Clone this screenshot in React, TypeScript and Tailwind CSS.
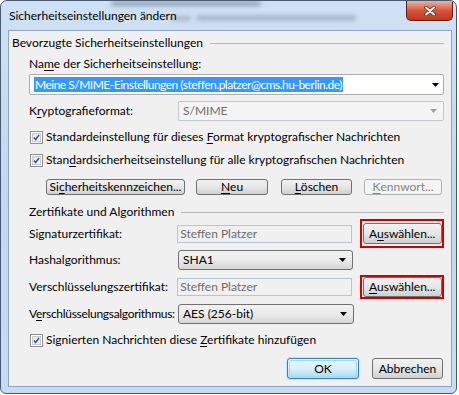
import React from "react";

const Check = () => (
  <div className="w-[13px] h-[13px] border border-[#8e8f8f] bg-white p-px shrink-0">
    <div className="w-full h-full border border-[#c6cbd1] bg-gradient-to-br from-[#dfe3e8] to-[#fbfbfb] flex items-center justify-center">
      <svg width="9" height="9" viewBox="0 0 9 9">
        <path d="M1.2 4.6 L3.4 7 L7.8 1.4" fill="none" stroke="#3f5486" strokeWidth="2" />
      </svg>
    </div>
  </div>
);

const Arrow = ({ color = "#000" }: { color?: string }) => (
  <svg width="7" height="4" viewBox="0 0 7 4">
    <path d="M0 0 H7 L3.5 4 Z" fill={color} />
  </svg>
);

const Btn = ({ children, className = "", disabled = false }: { children: React.ReactNode; className?: string; disabled?: boolean }) => (
  <div
    className={
      "flex items-center justify-center rounded-[3px] border " +
      (disabled
        ? "border-[#adb2b5] bg-[#f4f4f4] text-[#838383] "
        : "border-[#707070] bg-gradient-to-b from-[#f2f2f2] via-[#e6e6e6] to-[#d0d0d0] text-black ") +
      className
    }
  >
    {children}
  </div>
);

const Select = ({ value, className = "" }: { value: string; className?: string }) => (
  <div className={"flex items-center justify-between rounded-[3px] border border-[#707070] bg-gradient-to-b from-[#f2f2f2] via-[#ebebeb] to-[#d6d6d6] pl-[4px] pr-[6px] " + className}>
    <span>{value}</span>
    <Arrow />
  </div>
);

const ReadOnly = ({ value, className = "" }: { value: string; className?: string }) => (
  <div className={"flex items-center border border-[#b5c3d2] bg-[#f0f0f0] pl-[2px] text-[#6d6d6d] " + className}>
    {value}
  </div>
);

const U = ({ children }: { children: React.ReactNode }) => <span className="underline underline-offset-[2px]">{children}</span>;

export default function App() {
  return (
    <div className="w-[459px] h-[395px] bg-white font-[family-name:Lato,Arial,sans-serif] text-[12px] leading-4 text-black">
      <div className="relative w-[457px] h-[394px] rounded-t-[7px] rounded-b-[6px] border border-[#4a5a6e] bg-gradient-to-b from-[#cfe1f4] via-[#c2d8ef] to-[#c6dcf2] flex flex-col overflow-hidden">
        {/* blurred background through the glass */}
        <div className="pointer-events-none absolute left-[110px] top-[0px] w-[150px] h-[5px] rounded-full bg-[#5b6b80]/50 blur-[2px]" />
        <div className="pointer-events-none absolute left-[195px] top-[14px] w-[160px] h-[6px] rounded-full bg-[#6d7d92]/40 blur-[2px]" />
        <div className="pointer-events-none absolute left-[170px] top-[15px] w-[20px] h-[5px] rounded-full bg-[#6d7d92]/40 blur-[2px]" />

        <div className="relative h-[29px] flex items-start justify-between">
          <span className="ml-[8px] mt-[7px] text-[12px] text-black">Sicherheitseinstellungen ändern</span>
          <div className="mr-[3px] w-[47px] h-[20px] rounded-b-[5px] border border-t-0 border-[#5a1f18] bg-gradient-to-b from-[#eab0a0] via-[#d6553b] to-[#c1361c] flex items-center justify-center">
            <svg width="12" height="10" viewBox="0 0 12 10">
              <path d="M2 1.5 L10 8.5 M10 1.5 L2 8.5" stroke="#5a2a22" strokeWidth="3.6" strokeLinecap="round" />
              <path d="M2 1.5 L10 8.5 M10 1.5 L2 8.5" stroke="#ffffff" strokeWidth="2" strokeLinecap="round" />
            </svg>
          </div>
        </div>

        <div className="relative ml-[7px] w-[444px] h-[357px] border border-[#8fa5bf] bg-[#f0f0f0] flex flex-col">
          {/* Bevorzugte Sicherheitseinstellungen */}
          <div className="mt-[4px] h-4 flex items-center pl-[3px] pr-[7px]">
            <span>Bevorzugte Sicherheitseinstellungen</span>
            <div className="flex-1 h-px bg-[#b9b9b9] ml-[7px]" />
          </div>

          <div className="pl-[20px] pr-[7px] flex flex-col">
            <div className="mt-[5px] h-4">
              Na<U>m</U>e der Sicherheitseinstellung:
            </div>
            <div className="mt-[2px] h-[21px] rounded-[2px] border border-[#abadb3] bg-white flex items-center justify-between pl-[4px] pr-[4px]">
              <span className="bg-[#3399ff] text-white px-px leading-[15px] tracking-[-0.5px]">Meine S/MIME-Einstellungen (steffen.platzer@cms.hu-berlin.de)</span>
              <Arrow />
            </div>

            <div className="mt-[6px] h-[20px] flex items-center">
              <span className="w-[149px]">
                K<U>r</U>yptografieformat:
              </span>
              <div className="flex-1 h-[20px] rounded-[2px] border border-[#c3c8ce] bg-[#f4f4f4] text-[#6d6d6d] flex items-center justify-between pl-[4px] pr-[6px]">
                <span>S/MIME</span>
                <Arrow color="#a0a0a0" />
              </div>
            </div>

            <div className="mt-[8px] h-4 flex items-center pl-[1px]">
              <Check />
              <span className="ml-[3px]">
                Standardeinstellung für dieses <U>F</U>ormat kryptografischer Nachrichten
              </span>
            </div>
            <div className="mt-[7px] h-4 flex items-center pl-[1px]">
              <Check />
              <span className="ml-[3px]">
                Stan<U>d</U>ardsicherheitseinstellung für alle kryptografischen Nachrichten
              </span>
            </div>

            <div className="mt-[11px] h-[16px] flex">
              <Btn className="ml-[17px] w-[139px] h-[16px]">
                Si<U>c</U>herheitskennzeichen...
              </Btn>
              <Btn className="ml-[11px] w-[72px] h-[16px]">
                <U>N</U>eu
              </Btn>
              <Btn className="ml-[13px] w-[71px] h-[16px]">
                <U>L</U>öschen
              </Btn>
              <Btn disabled className="ml-[12px] w-[78px] h-[16px]">
                <U>K</U>ennwort...
              </Btn>
            </div>

            {/* Zertifikate und Algorithmen */}
            <div className="mt-[10px] h-[14px] flex items-center">
              <span>Zertifikate und Algorithmen</span>
              <div className="flex-1 h-px bg-[#b9b9b9] ml-[7px]" />
            </div>

            <div className="h-[29px] flex items-center">
              <span className="w-[149px]">Signaturzertifikat:</span>
              <ReadOnly value="Steffen Platzer" className="w-[176px] h-[18px]" />
              <div className="ml-[8px] w-[84px] h-[29px] border-2 border-[#d00000] flex items-center justify-center">
                <Btn className="w-[79px] h-[21px]">
                  A<U>u</U>swählen...
                </Btn>
              </div>
            </div>

            <div className="mt-[2px] h-[20px] flex items-center">
              <span className="w-[149px]">Hashalgorithmus:</span>
              <Select value="SHA1" className="w-[175px] h-[20px]" />
            </div>

            <div className="mt-[5px] h-[24px] flex items-center">
              <span className="w-[149px]">Verschlüsselungszertifikat:</span>
              <ReadOnly value="Steffen Platzer" className="w-[176px] h-[18px]" />
              <div className="ml-[8px] w-[84px] h-[24px] border-2 border-[#d00000] flex items-center justify-center">
                <Btn className="w-[79px] h-[20px]">
                  <U>A</U>uswählen...
                </Btn>
              </div>
            </div>

            <div className="mt-[5px] h-[20px] flex items-center">
              <span className="w-[149px] tracking-[-0.3px]">
                V<U>e</U>rschlüsselungsalgorithmus:
              </span>
              <Select value="AES (256-bit)" className="w-[176px] h-[20px]" />
            </div>

            <div className="mt-[8px] h-4 flex items-center pl-[1px]">
              <Check />
              <span className="ml-[3px]">
                Signierten Nachrichten diese <U>Z</U>ertifikate hinzufügen
              </span>
            </div>
          </div>

          <div className="mt-[10px] h-[21px] flex justify-end pr-[8px]">
            <div className="w-[72px] h-[21px] rounded-[3px] border border-[#3c7fb1] bg-gradient-to-b from-[#eaf6fd] via-[#d9f0fc] to-[#a7d9f5] p-px shadow-[0_0_2px_#7fc4f0]">
              <div className="w-full h-full rounded-[2px] border border-[#9fdcf7] flex items-center justify-center">OK</div>
            </div>
            <Btn className="ml-[13px] w-[71px] h-[21px]">Abbrechen</Btn>
          </div>
        </div>
      </div>
    </div>
  );
}
